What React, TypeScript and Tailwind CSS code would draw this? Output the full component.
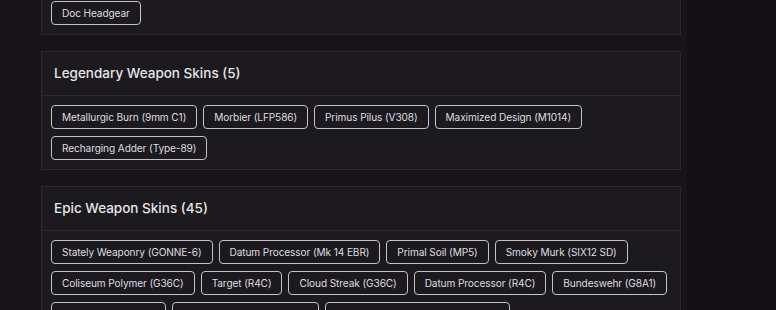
import React from "react";

const font = { fontFamily: "Inter, 'Noto Sans', sans-serif" };

function Chip({ label }: { label: string }) {
  return (
    <span className="inline-flex h-[24px] items-center rounded-[4px] border border-[#c4c3c6] px-[10px] text-[10.1px] leading-none tracking-[-0.1px] text-[#dedde0] whitespace-nowrap">
      {label}
    </span>
  );
}

function Card({ title, items, className = "" }: { title?: string; items: string[]; className?: string }) {
  return (
    <div className={"w-[640px] border border-[#2b292e] bg-[#1c1a1e] " + className}>
      {title && (
        <div className="flex h-[44px] items-center border-b border-[#2b292e] px-[12px] text-[13.5px] font-medium text-[#e6e5e8]">
          {title}
        </div>
      )}
      <div className="flex flex-wrap gap-x-[6px] gap-y-[7px] p-[9px]">
        {items.map((it, i) => (
          <Chip key={i} label={it} />
        ))}
      </div>
    </div>
  );
}

export default function App() {
  return (
    <div className="flex h-[310px] w-[776px] overflow-hidden bg-[#121013]" style={font}>
      <div className="h-full w-[687px] shrink-0 bg-[#171519] pl-[41px]">
        <div className="-mt-[9px] flex flex-col gap-4">
          <Card items={["Doc Headgear"]} />
          <Card
            title="Legendary Weapon Skins (5)"
            items={[
              "Metallurgic Burn (9mm C1)",
              "Morbier (LFP586)",
              "Primus Pilus (V308)",
              "Maximized Design (M1014)",
              "Recharging Adder (Type-89)",
            ]}
          />
          <Card
            title="Epic Weapon Skins (45)"
            items={[
              "Stately Weaponry (GONNE-6)",
              "Datum Processor (Mk 14 EBR)",
              "Primal Soil (MP5)",
              "Smoky Murk (SIX12 SD)",
              "Coliseum Polymer (G36C)",
              "Target (R4C)",
              "Cloud Streak (G36C)",
              "Datum Processor (R4C)",
              "Bundeswehr (G8A1)",
              "Battle Scars (M870)",
              "Tactical Camo (Mk 14 EBR)",
              "Ornamental Stripes (Commando 9)",
            ]}
          />
        </div>
      </div>
    </div>
  );
}
